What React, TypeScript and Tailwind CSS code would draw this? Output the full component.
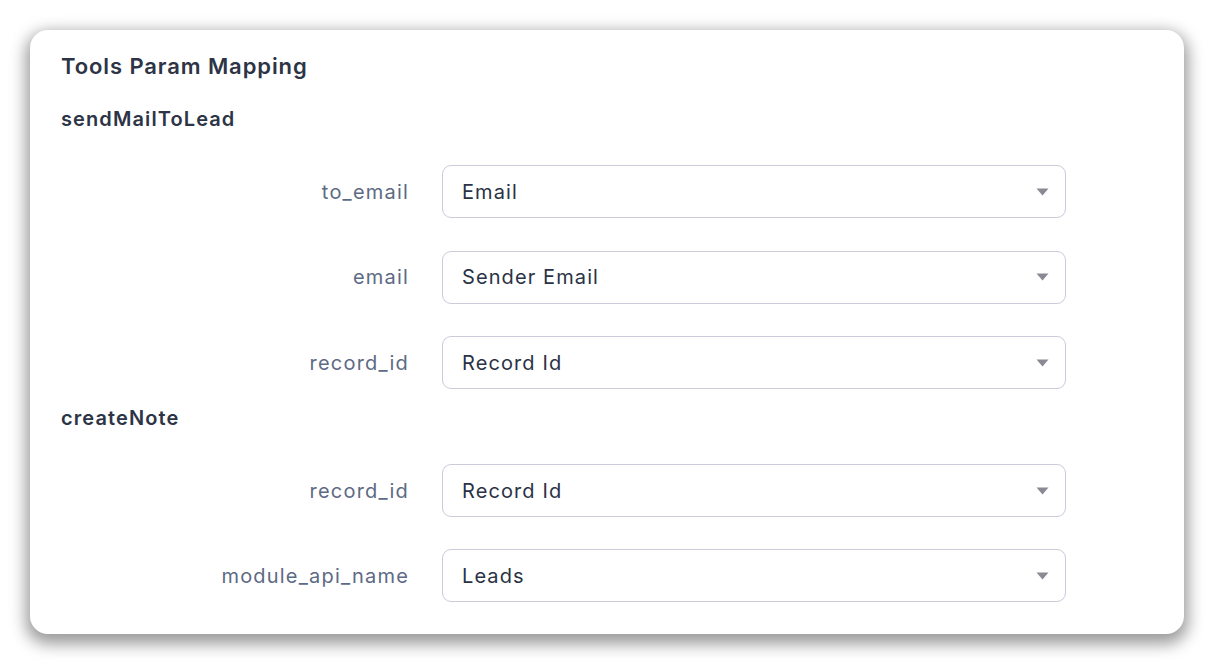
import React from "react";

const Caret = () => (
  <svg width="13" height="8" viewBox="0 0 13 8" className="shrink-0">
    <path d="M0.5 0.5 H12.5 L6.5 7.5 Z" fill="#8a8a95" />
  </svg>
);

const Row = ({ label, value }: { label: string; value: string }) => (
  <div className="flex items-center">
    <div className="mr-[-1px] w-[348px] text-right text-[20px] tracking-[1.2px] text-[#5d6a84]">{label}</div>
    <div className="ml-[34px] flex h-[53px] w-[624px] items-center justify-between rounded-[9px] border border-[#cdcad9] pl-[19px] pr-[16px] text-[20px] tracking-[1.1px] text-[#2a3245]">
      <span>{value}</span>
      <Caret />
    </div>
  </div>
);

export default function App() {
  return (
    <div
      className="h-[664px] w-[1214px] bg-white p-[30px]"
      style={{ fontFamily: "Inter, 'Noto Sans', sans-serif" }}
    >
      <div className="h-[604px] w-[1154px] rounded-[18px] bg-white pl-[31px] pt-[21px] shadow-[0_6px_16px_4px_rgba(0,0,0,0.4)]">
        <h1 className="text-[22px] font-semibold leading-[30px] tracking-[0.9px] text-[#2d3446]">Tools Param Mapping</h1>
        <h2 className="mt-[23px] text-[20px] font-semibold leading-[30px] tracking-[1.1px] text-[#2d3446]">sendMailToLead</h2>
        <div className="mt-[31px] flex flex-col gap-[32.5px]">
          <Row label="to_email" value="Email" />
          <Row label="email" value="Sender Email" />
          <Row label="record_id" value="Record Id" />
        </div>
        <h2 className="mt-[14px] text-[20px] font-semibold leading-[30px] tracking-[1.1px] text-[#2d3446]">createNote</h2>
        <div className="mt-[31px] flex flex-col gap-[32px]">
          <Row label="record_id" value="Record Id" />
          <Row label="module_api_name" value="Leads" />
        </div>
      </div>
    </div>
  );
}
